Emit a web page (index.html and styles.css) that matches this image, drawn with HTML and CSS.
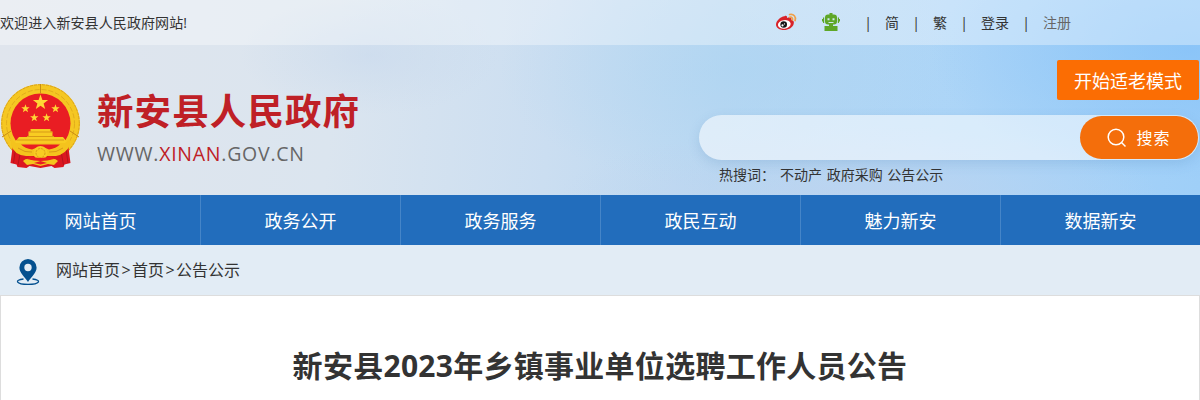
FILE: index.html
```html
<!DOCTYPE html>
<html lang="zh-CN">
<head>
  <meta charset="UTF-8">
  <title>新安县2023年乡镇事业单位选聘工作人员公告</title>
  <link rel="stylesheet" href="styles.css">
</head>
<body>

  <header class="header">
    <div class="topbar">
      <span class="welcome">欢迎进入新安县人民政府网站!</span>
      <div class="top-links">
        <svg class="weibo" width="22" height="18" viewBox="0 0 22 18">
          <path d="M8.500 3.200C10 2.200 11.400 3 11 5c2.600-1 4.800-.4 4.200 1.600 2.400.8 3.200 2.400 2.400 4.600C16.500 14.500 12.500 17 8 17S0 14.800 0 11.500C0 8 4.500 3.500 8.500 3.200z" fill="#d8232a"/>
          <ellipse cx="8.300" cy="11.400" rx="6.400" ry="4.300" transform="rotate(-7 8.300 11.400)" fill="#fff"/>
          <circle cx="7.700" cy="11.500" r="3.300" fill="#151515"/>
          <circle cx="6.500" cy="12.400" r="1.100" fill="#fff"/>
          <circle cx="8.500" cy="10.900" r=".6" fill="#fff"/>
          <path d="M13.600 1.500c4-1 6.800 2.300 5.500 6M13.800 4.300c2-.4 3 .8 2.600 2.600" fill="none" stroke="#f0a04b" stroke-width="1.800" stroke-linecap="round"/>
        </svg>
        <svg class="robot" width="18" height="18" viewBox="0 0 18 18" fill="#5ea727">
          <path d="M7.500 0h3v1.500h1.500q3 0 3 3v4q0 3-3 3h-6q-3 0-3-3v-4q0-3 3-3h1.500zM0 6h1V4.500h1.200v5.500H1V8.500H0zM18 6h-1V4.500h-1.200v5.500H17V8.500h1zM7 11h4v2.500H7zM2.500 13h13v5h-13z"/>
          <path d="M5.500 5.200h2v2h-2zM10.500 5.200h2v2h-2zM6.500 9h5v1h-5z" fill="#cfe7ec"/>
        </svg>
        <i class="sep">|</i>
        <a class="simple">简</a>
        <i class="sep">|</i>
        <a class="trad">繁</a>
        <i class="sep">|</i>
        <a class="login">登录</a>
        <i class="sep">|</i>
        <a class="register">注册</a>
      </div>
    </div>

    <div class="banner">
      <div class="logo">
        <svg class="emblem" width="80" height="86" viewBox="0 0 80 86">
          <circle cx="40.500" cy="39.500" r="39.500" fill="#f5c722"/>
          <circle cx="40.500" cy="39.500" r="38.800" fill="none" stroke="#d9a01c" stroke-width="1" stroke-dasharray="3 1"/>
          <circle cx="40.500" cy="39.500" r="34" fill="none" stroke="#e2ad1c" stroke-width="1" stroke-dasharray="5 2"/>
          <path d="M40.500 0v9M2 53l9-6M79 53l-9-6" stroke="#c98c13" fill="none"/>
          <circle cx="40.500" cy="39.500" r="30" fill="#e91d23"/>
          <g fill="#ffd735">
            <path id="star" d="M40.500 10.500l1.900 5.400 5.700.1-4.500 3.500 1.600 5.500-4.700-3.200-4.700 3.200 1.600-5.500-4.500-3.500 5.700-.1z"/>
            <use href="#star" transform="translate(3.200 14.500) scale(.55)"/>
            <use href="#star" transform="translate(33.200 14.500) scale(.55)"/>
            <use href="#star" transform="translate(12 23.500) scale(.55)"/>
            <use href="#star" transform="translate(24.300 23.500) scale(.55)"/>
          </g>
          <!-- ribbon tails -->
          <path d="M13 60L10.500 79l6 1.500 1 2.500 9 1 3-2 11 2 11-2 3 2 9-1 1-2.500 6-1.500L68 60 52 66H29z" fill="#dc1720"/>
          <path d="M15.500 65l-2 14M20 70l-2 11M66 65l2 14M61.500 70l2 11" stroke="#b3141d"/>
          <!-- gate -->
          <path d="M30.500 45h20v2.500h2V53H63l5 6-3 2H17l-3-2 5-6h9.500v-5.500h2z" fill="#f8cc22"/>
          <path d="M29 48h23M27 52.500h27M17 56h47" stroke="#d79a16" fill="none"/>
          <!-- sheaves and gear -->
          <path d="M11 55l5 4h49l5-4v6q-4 9-14 11H26Q14 71 11 61z" fill="#f4c31d"/>
          <path d="M21 60.500h39q-4 4-11 5-8-5-17 0-7-1-11-5z" fill="#e91d23"/>
          <path d="M18 64q7 5 14 4M63 64q-7 5-14 4" stroke="#d99a16" fill="none"/>
          <circle cx="40.500" cy="69" r="7" fill="#f8cc22"/>
          <circle cx="40.500" cy="69" r="4.500" fill="none" stroke="#d99a16" stroke-dasharray="2 1"/>
          <path d="M23 77q4-4 9-1 8-4 17 0 5-3 9 1l-4 4-6-1-7.500 2-7.500-2-6 1z" fill="#f5c51c"/>
          <path d="M30 72q10 4 21 0l3 3q-13 4-27 0zM34 79l6.500-2 6.500 2-6.500 1.500z" fill="#e91d23"/>
        </svg>
        <div class="logo-text">
          <h1>新安县人民政府</h1>
          <p>WWW.<b>XINAN</b>.GOV.CN</p>
        </div>
      </div>

      <div class="tools">
        <a class="elder">开始适老模式</a>
        <div class="search">
          <button class="search-btn">
            <svg width="20" height="20" viewBox="0 0 20 20" fill="none" stroke="#fff" stroke-width="1.500">
              <circle cx="9" cy="9" r="7.800"/>
              <path d="M14.500 14.500l4 4"/>
            </svg>
            <span>搜索</span>
          </button>
        </div>
        <p class="hot"><span>热搜词：</span>不动产 政府采购 公告公示</p>
      </div>
    </div>
  </header>

  <nav class="nav">
    <a>网站首页</a>
    <a>政务公开</a>
    <a>政务服务</a>
    <a>政民互动</a>
    <a>魅力新安</a>
    <a>数据新安</a>
  </nav>

  <div class="crumbs">
    <svg width="24" height="27" viewBox="0 0 24 27">
      <path d="M6.500 20C-3 21 -1 25.300 11 25.300s14-4.300 4.500-5.300" fill="none" stroke="#04508f" stroke-width="1.300"/>
      <path fill-rule="evenodd" d="M11 0a8.600 8.600 0 0 0-8.600 8.600C2.400 14 7.500 18 11 23c3.500-5 8.600-9 8.600-14.400A8.600 8.600 0 0 0 11 0zm0 4.800a3.700 3.700 0 1 1 0 7.400 3.700 3.700 0 0 1 0-7.400z" fill="#04508f"/>
    </svg>
    <span>网站首页</span><span class="gt">&gt;</span><span>首页</span><span class="gt">&gt;</span><span>公告公示</span>
  </div>

  <main class="content">
    <h2>新安县2023年乡镇事业单位选聘工作人员公告</h2>
  </main>

</body>
</html>
```

FILE: styles.css
```css
* {
  box-sizing: border-box;
  margin: 0;
  padding: 0;
}

body {
  height: 400px;
  overflow: hidden;
  font-family: "Open Sans", "Noto Sans CJK SC", sans-serif;
  font-size: 14px;
  color: #333;
  background: #fff;
}

svg {
  display: block;
  flex: none;
  overflow: visible;
}

.header {
  height: 195px;
  background:
    radial-gradient(ellipse 260px 130px at 1190px 50px, rgba(130, 192, 248, 0.7), transparent),
    radial-gradient(ellipse 240px 120px at 740px 70px, rgba(168, 211, 242, 0.5), transparent),
    radial-gradient(ellipse 130px 60px at 370px 55px, rgba(200, 217, 237, 0.6), transparent),
    radial-gradient(ellipse 300px 70px at 860px 195px, rgba(190, 211, 238, 0.8), transparent),
    linear-gradient(95deg, #e0e5ed 0%, #dbe5ef 28%, #cbdef1 46%, #bad8f2 60%, #add5f7 78%, #9fcff8 100%);
}

.topbar {
  display: flex;
  height: 45px;
  line-height: 45px;
  background: rgba(255, 255, 255, 0.35);
}

.welcome {
  width: 776px;
  letter-spacing: 0.100px;
}

.top-links {
  display: flex;
}

.weibo {
  margin: 13px 24px 0 0;
}

.robot {
  margin: 13px 24px 0 0;
}

.sep {
  width: 8px;
  font-style: normal;
  text-align: center;
}

.simple {
  margin: 0 13px 0 13px;
}

.trad {
  margin: 0 13px 0 13px;
}

.login {
  margin: 0 13px 0 13px;
}

.register {
  margin-left: 13px;
  color: #666;
}

.banner {
  display: flex;
  justify-content: space-between;
  height: 150px;
}

.logo {
  display: flex;
  padding-top: 39px;
}

.logo-text {
  margin-left: 17px;
}

.logo-text h1 {
  font-size: 36.500px;
  line-height: 54px;
  letter-spacing: 1.100px;
  color: #bf2026;
}

.logo-text p {
  margin-top: 2px;
  font-size: 19.500px;
  line-height: 28px;
  letter-spacing: 0.750px;
  color: #666;
}

.logo-text b {
  font-weight: normal;
  color: #bf2026;
}

.tools {
  width: 501px;
  padding-top: 15px;
}

.elder {
  display: block;
  width: 142px;
  height: 40px;
  margin: 0 1px 15px auto;
  font-size: 18px;
  line-height: 42px;
  text-align: center;
  color: #fff;
  background: #fb6d03;
  border-radius: 2px;
}

.search {
  display: flex;
  justify-content: flex-end;
  width: 500px;
  height: 45px;
  padding: 1px;
  background: rgba(255, 255, 255, 0.55);
  border-radius: 23px;
  box-shadow: 0 4px 12px rgba(80, 130, 180, 0.2);
}

.search-btn {
  display: flex;
  align-items: center;
  justify-content: center;
  gap: 9px;
  width: 118px;
  height: 43px;
  font: 16px "Open Sans", "Noto Sans CJK SC", sans-serif;
  letter-spacing: 1px;
  color: #fff;
  background: #f46e0b;
  border: none;
  border-radius: 22px;
}

.search-btn span {
  padding-bottom: 2px;
}

.hot {
  padding-left: 20px;
  line-height: 30px;
  word-spacing: 1px;
}

.hot span {
  margin-right: 5px;
}

.nav {
  display: grid;
  grid-template-columns: repeat(6, 1fr);
  height: 50px;
  background: #226dbc;
}

.nav a {
  height: 50px;
  font-size: 18px;
  line-height: 52px;
  text-align: center;
  color: #fff;
  border-left: 1px solid #4585c8;
}

.nav a:first-child {
  border-color: transparent;
}

.crumbs {
  display: flex;
  height: 50px;
  padding-left: 17px;
  font-size: 16px;
  line-height: 50px;
  background: #e2ecf5;
}

.crumbs svg {
  margin: 14px 15px 0 0;
}

.crumbs .gt {
  width: 12px;
  text-align: center;
}

.content {
  height: 106px;
  border: 1px solid #ddd;
}

.content h2 {
  padding-top: 46px;
  font-size: 30px;
  line-height: 48px;
  letter-spacing: 0.280px;
  text-align: center;
}
```
